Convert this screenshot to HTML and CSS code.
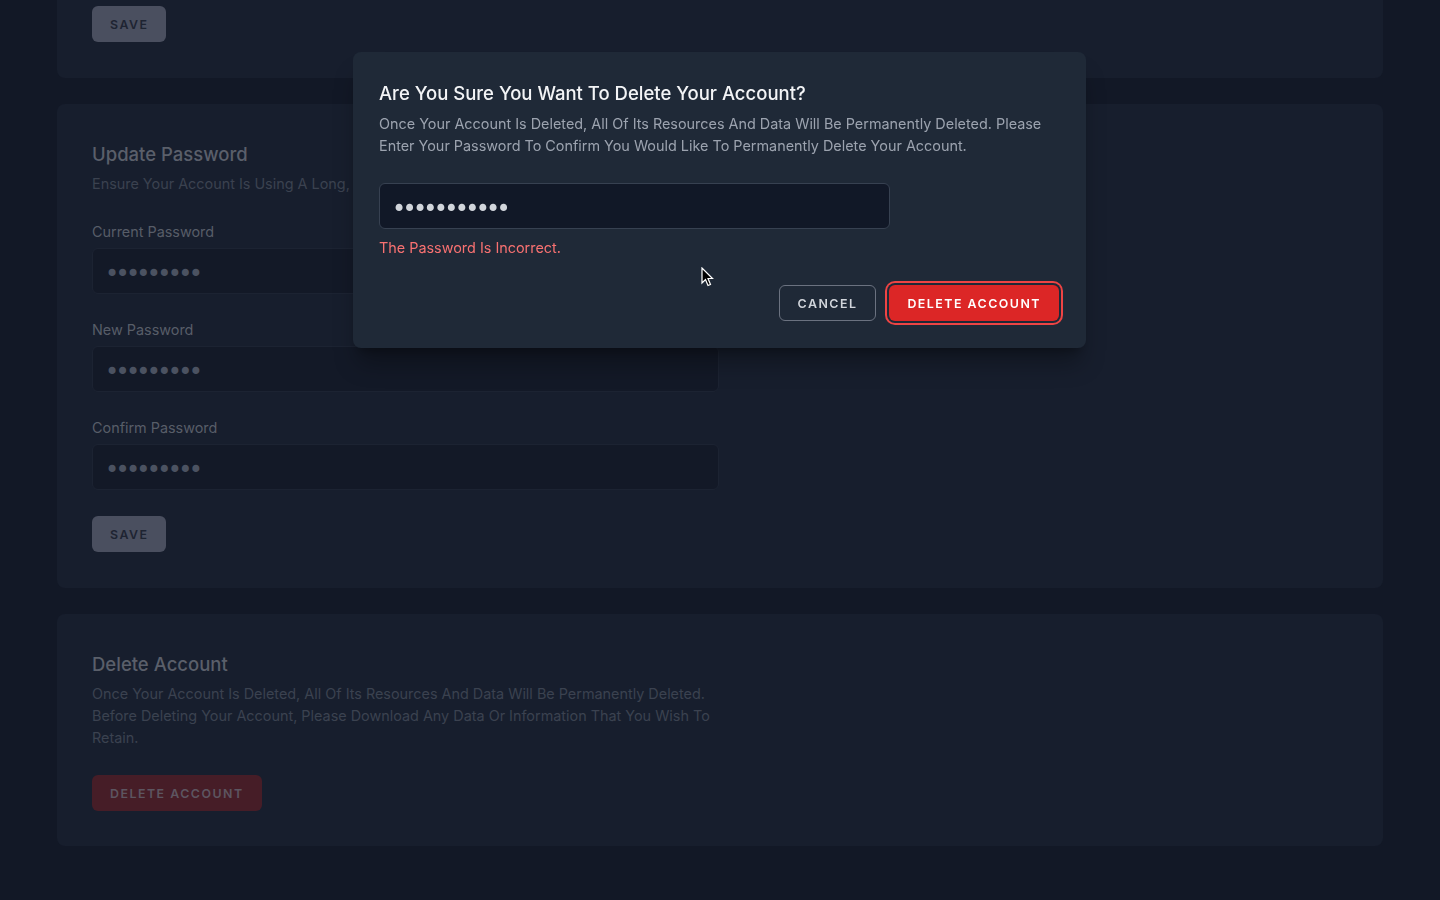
FILE: index.html
```html
<!DOCTYPE html>
<html lang="en">
<head>
<meta charset="utf-8">
<title>Profile</title>
<link rel="stylesheet" href="styles.css">
</head>
<body>
<main class="page">
  <section class="card card-top">
    <button class="btn-save" type="button">Save</button>
  </section>

  <section class="card card-mid">
    <h2 class="card-title">Update Password</h2>
    <p class="card-desc">Ensure your account is using a long, random password to stay secure.</p>
    <form class="form">
      <div class="field">
        <label class="label">Current Password</label>
        <input class="input" type="password" value="123456789">
      </div>
      <div class="field">
        <label class="label">New Password</label>
        <input class="input" type="password" value="123456789">
      </div>
      <div class="field">
        <label class="label">Confirm Password</label>
        <input class="input" type="password" value="123456789">
      </div>
      <div class="actions">
        <button class="btn-save" type="button">Save</button>
      </div>
    </form>
  </section>

  <section class="card">
    <h2 class="card-title">Delete Account</h2>
    <p class="card-desc narrow">Once your account is deleted, all of its resources and data will be permanently deleted. Before deleting your account, please download any data or information that you wish to retain.</p>
    <div class="actions">
      <button class="btn-danger-dim" type="button">Delete Account</button>
    </div>
  </section>
</main>

<div class="modal">
  <h2 class="modal-title">Are you sure you want to delete your account?</h2>
  <p class="modal-desc">Once your account is deleted, all of its resources and data will be permanently deleted. Please enter your password to confirm you would like to permanently delete your account.</p>
  <input class="modal-input" type="password" value="12345678901">
  <p class="modal-error">The password is incorrect.</p>
  <div class="modal-actions">
    <button class="btn-cancel" type="button">Cancel</button>
    <button class="btn-delete" type="button">Delete Account</button>
  </div>
</div>

<svg class="cursor" width="13" height="20" viewBox="0 0 13 20" aria-hidden="true">
  <path d="M1 1 L1 16 L4.5 12.5 L7 18.5 L9.5 17.5 L7 11.5 L11.5 11.5 Z" fill="#000" stroke="#fff" stroke-width="1.2" stroke-linejoin="miter"/>
</svg>
</body>
</html>
```

FILE: styles.css
```css
* { box-sizing: border-box; }

html, body {
  margin: 0;
  padding: 0;
}

body {
  background: #121826;
  font-family: "Inter", "Noto Sans", sans-serif;
  text-transform: capitalize;
  height: 900px;
  overflow: hidden;
}

.page {
  width: 1326px;
  margin: -33px auto 0;
  display: flex;
  flex-direction: column;
  gap: 26px;
}

.card {
  background: #171e2d;
  border-radius: 8px;
  padding: 35px;
}

.card-top {
  padding-top: 39px;
  padding-bottom: 36px;
}

.card-mid {
  padding-bottom: 36px;
}

.card-title {
  margin: 0;
  font-size: 18.5px;
  line-height: 30px;
  font-weight: 500;
  color: #5a5f6a;
}

.card-desc {
  margin: 4px 0 0;
  font-size: 14.4px;
  line-height: 22px;
  color: #3b4250;
}

.card-desc.narrow {
  max-width: 627px;
}

.form {
  margin-top: 26px;
  display: flex;
  flex-direction: column;
  gap: 25px;
  max-width: 627px;
}

.field {
  display: flex;
  flex-direction: column;
  gap: 5px;
}

.label {
  font-size: 14.4px;
  line-height: 22px;
  color: #575d68;
}

.input,
.modal-input {
  height: 46px;
  border-radius: 6px;
  padding: 6px 0 0 12px;
  font-family: "DejaVu Sans", sans-serif;
  font-size: 24px;
  letter-spacing: -3.7px;
  outline: none;
}

.input {
  width: 100%;
  background: #131927;
  border: 1px solid #1c2332;
  color: #4b5261;
}

.actions {
  margin-top: 26px;
  display: flex;
}

.form .actions {
  margin-top: 1px;
}

.btn-save,
.btn-danger-dim,
.btn-cancel,
.btn-delete {
  font-family: "Inter", "Noto Sans", sans-serif;
  text-transform: uppercase;
  font-size: 12.4px;
  font-weight: 600;
  letter-spacing: 0.12em;
  border-radius: 6px;
  height: 36px;
  padding: 0 18px;
  cursor: pointer;
}

.btn-save {
  background: #4a4f5f;
  color: #1e2432;
  border: none;
}

.btn-danger-dim {
  background: #461d27;
  color: #5d5560;
  border: none;
}

.modal {
  position: fixed;
  top: 52px;
  left: 353px;
  width: 733px;
  background: #1f2937;
  border-radius: 8px;
  padding: 26px 26px 27px;
  box-shadow: 0 20px 25px -5px rgba(0,0,0,0.3), 0 8px 10px -6px rgba(0,0,0,0.3);
}

.modal-title {
  margin: 0;
  font-size: 18.5px;
  line-height: 30px;
  font-weight: 500;
  color: #f3f4f6;
}

.modal-desc {
  margin: 5px 0 0;
  font-size: 14.4px;
  line-height: 22px;
  color: #9ca3af;
}

.modal-input {
  display: block;
  margin-top: 26px;
  width: 511px;
  background: #111827;
  border: 1px solid #374151;
  color: #d1d5db;
}

.modal-error {
  margin: 8px 0 0;
  font-size: 14.4px;
  line-height: 22px;
  color: #f87171;
}

.modal-actions {
  margin-top: 26px;
  display: flex;
  justify-content: flex-end;
  gap: 13px;
  padding-right: 1px;
}

.btn-cancel {
  background: #1f2937;
  color: #d1d5db;
  border: 1px solid #6b7280;
}

.btn-delete {
  background: #dc2626;
  color: #ffffff;
  border: none;
  box-shadow: 0 0 0 2px #1f2937, 0 0 0 4px #ef4444;
}

.cursor {
  position: fixed;
  left: 701px;
  top: 267px;
}
```
